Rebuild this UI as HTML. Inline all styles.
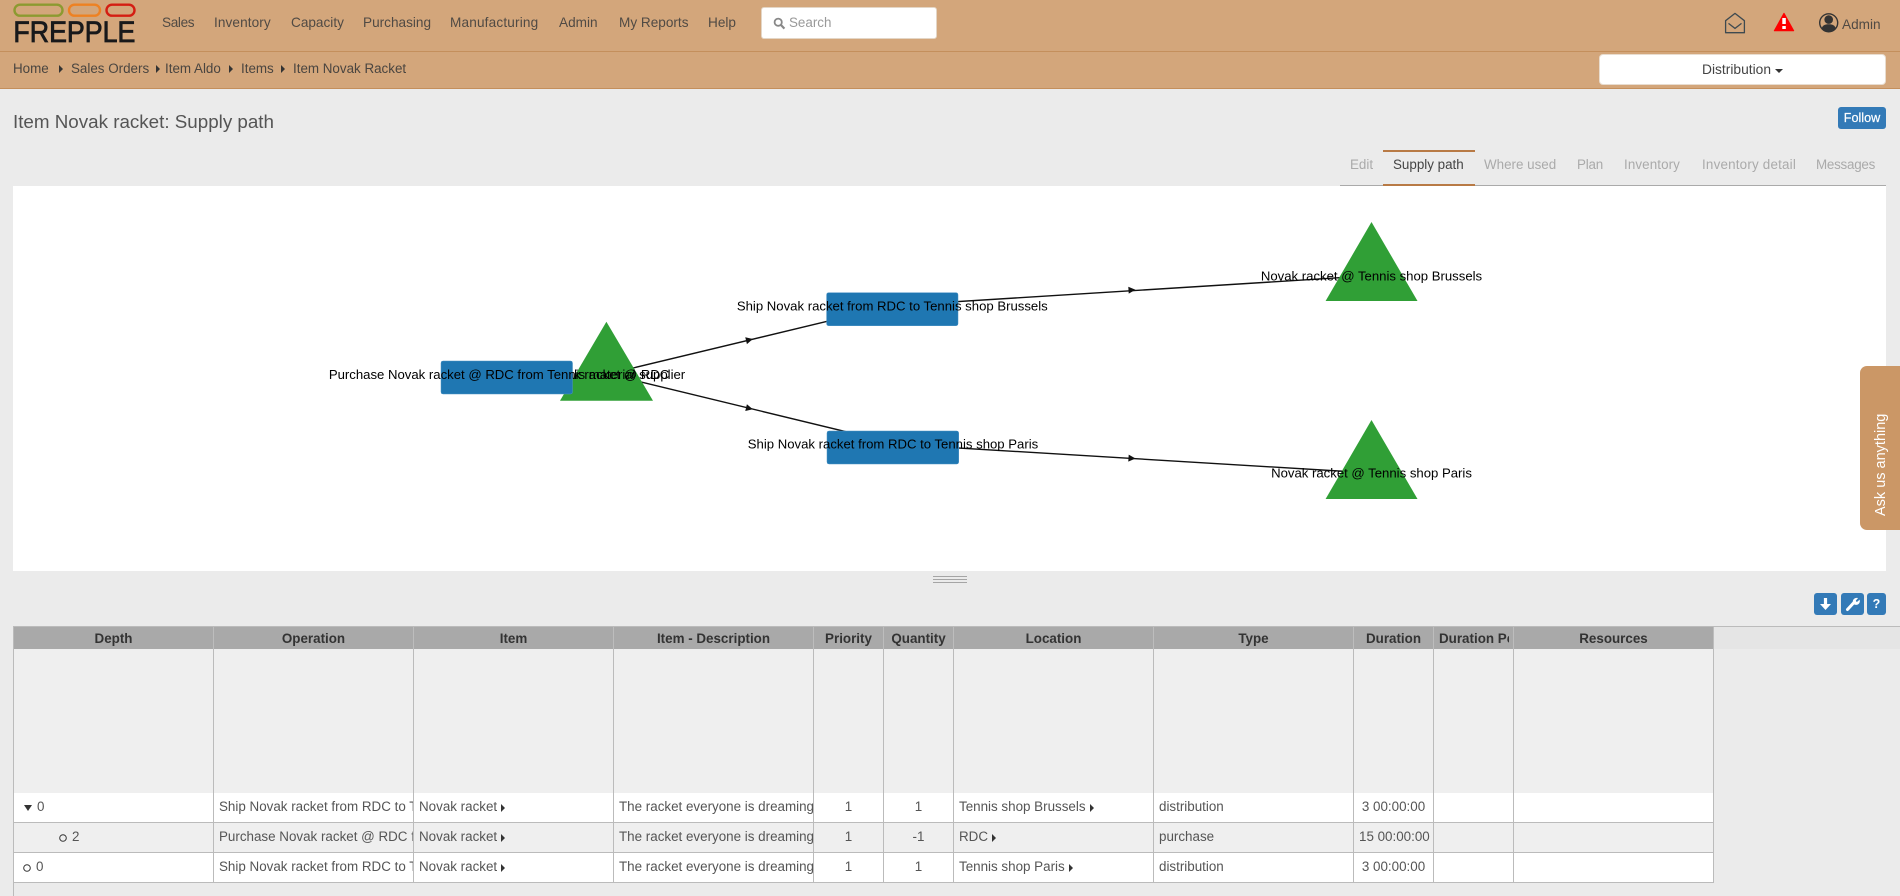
<!DOCTYPE html>
<html lang="en">
<head>
<meta charset="utf-8">
<title>Item Novak racket: Supply path</title>
<style>
html,body{margin:0;padding:0}
body{position:relative;width:1900px;height:896px;overflow:hidden;background:#ebebeb;font-family:"Liberation Sans",sans-serif;color:#555}
.a{position:absolute;white-space:nowrap}
#top{position:absolute;left:0;top:0;width:1900px;height:88px;background:#d3a67b;border-bottom:1px solid #c48f5c}
#top:before{content:"";position:absolute;left:0;right:0;top:51px;height:1px;background:#c48f5c}
.n{font-size:13.6px;line-height:20px;top:13px;color:#504a44}
.b{font-size:13.4px;line-height:20px;top:59px;color:#4a4540}
.ar{display:inline-block;width:0;height:0;border-left:4px solid #333;border-top:4px solid transparent;border-bottom:4px solid transparent}
#search{left:761px;top:7px;width:174px;height:30px;background:#fff;border:1px solid #e4d6c6;border-radius:3px}
#dist{left:1599px;top:54px;width:285px;height:29px;background:#fff;border:1px solid #e8dccf;border-radius:4px;text-align:center;font-size:13.8px;line-height:29px;color:#444}
.caret{display:inline-block;width:0;height:0;border-top:4px solid #333;border-left:4px solid transparent;border-right:4px solid transparent;vertical-align:1px;margin-left:4px}
#follow{left:1838px;top:107px;width:48px;height:22px;background:#337ab7;border-radius:3px;color:#fff;font-size:12.6px;line-height:22px;text-align:center;-webkit-text-stroke:.2px #fff}
.t{font-size:13.4px;line-height:20px;top:155px;color:#aaa}
#tabline{left:1340px;top:185px;width:546px;height:1px;background:#aaa}
#atab{left:1383px;top:150px;width:92px;height:2px;background:#b87a45}
#atab2{left:1383px;top:184px;width:92px;height:2px;background:#b87a45}
#graph{left:13px;top:186px;width:1873px;height:385px;background:#fff}
#ask{left:1860px;top:366px;width:40px;height:164px;background:#cb9766;border-radius:7px 0 0 7px}
#asktxt{left:1872px;top:413px;height:103px;line-height:18px;width:18px;writing-mode:vertical-rl;transform:rotate(180deg);color:#fff;font-size:14.5px;text-align:left}
.sp{left:933px;width:34px;height:1px;background:#a5a5a5}
.btn{top:593px;height:22px;background:#337ab7;border-radius:3px}
#grid{left:13px;top:626px;width:1887px;height:270px;border-top:1px solid #bbb;border-left:1px solid #bbb;box-sizing:border-box}
#grid:before{content:"";position:absolute;left:0;top:0;right:0;height:22px;background:#e5e5e5}
table{position:absolute;left:0;top:0;width:1700px;table-layout:fixed;border-collapse:separate;border-spacing:0;font-size:13.4px}
th,td{box-sizing:border-box;border-right:1px solid #bbb;overflow:hidden;white-space:nowrap;padding:0 5px}
th{height:22px;background:#a9a9a9;color:#333;font-weight:bold;font-size:13.4px;text-align:center;border-right-color:#bdbdbd}
th span{display:block;overflow:hidden;margin-right:-1px}
tr.f td{height:144px;background:#efefef}
tr.r td{height:30px;border-bottom:1px solid #bbb;padding-bottom:3px;color:#555;vertical-align:middle}
tr.w td{background:#fff}
tr.g td{background:#efefef}
td.c{text-align:center}
td .ar{margin-left:4px;vertical-align:-1px}
</style>
</head>
<body>
<header id="top">
<svg class="a" style="left:0;top:0" width="150" height="50" viewBox="0 0 150 50">
<rect x="14.5" y="4.7" width="48" height="11" rx="5.5" fill="none" stroke="#8c9a30" stroke-width="2.4"/>
<rect x="69" y="4.7" width="31" height="11" rx="5.5" fill="none" stroke="#ee8122" stroke-width="2.4"/>
<rect x="106.5" y="4.7" width="28" height="11" rx="5.5" fill="none" stroke="#d41d12" stroke-width="2.4"/>
<text x="13.4" y="42" font-family="Liberation Sans" font-size="29.5" fill="#18191b" stroke="#18191b" stroke-width=".8" textLength="122" lengthAdjust="spacingAndGlyphs">FREPPLE</text>
</svg>
<span class="a n" style="left:162px;letter-spacing:-.35px">Sales</span>
<span class="a n" style="left:214px;letter-spacing:.1px">Inventory</span>
<span class="a n" style="left:291px">Capacity</span>
<span class="a n" style="left:363px">Purchasing</span>
<span class="a n" style="left:450px;letter-spacing:.17px">Manufacturing</span>
<span class="a n" style="left:559px">Admin</span>
<span class="a n" style="left:619px">My Reports</span>
<span class="a n" style="left:708px">Help</span>
<div class="a" id="search">
<svg class="a" style="left:11px;top:9px" width="13" height="13" viewBox="0 0 13 13"><circle cx="5.2" cy="5.2" r="3.6" fill="none" stroke="#888" stroke-width="1.8"/><path d="M8 8l3.4 3.6" stroke="#888" stroke-width="2.2"/></svg>
<span class="a" style="left:27px;top:5px;font-size:13.4px;line-height:20px;color:#999">Search</span>
</div>
<svg class="a" style="left:1720px;top:8px" width="180" height="30" viewBox="1720 8 180 30">
<path d="M1725.6 20.7L1735 13.4l9.4 7.3v12h-18.8z" fill="none" stroke="#3e4a50" stroke-width="1.3" stroke-linejoin="round"/>
<path d="M1728.5 23.4l6.5 5 6.5-5" fill="none" stroke="#3e4a50" stroke-width="1.3"/>
<path d="M1784 13.3l9.7 17.4h-19.4z" fill="#fe0000" stroke="#fe0000" stroke-linejoin="round"/>
<path d="M1782.3 18h3.5v6h-3.5zM1782.3 26h3.5v3h-3.5z" fill="#fff"/>
<circle cx="1828.7" cy="22.8" r="9" fill="none" stroke="#333" stroke-width="1.4"/>
<circle cx="1828.7" cy="19.6" r="4.3" fill="#333"/>
<path d="M1821.8 28.2c.6-2.8 3-4 6.9-4s6.3 1.2 6.9 4c-1.6 2.4-4 3.8-6.9 3.8s-5.3-1.4-6.9-3.8z" fill="#333"/>
</svg>
<span class="a" style="left:1842px;top:15px;font-size:13.6px;line-height:20px;color:#504a44">Admin</span>
<span class="a b" style="left:13px">Home</span><i class="a ar" style="left:59px;top:65px"></i>
<span class="a b" style="left:71px">Sales Orders</span><i class="a ar" style="left:156px;top:65px"></i>
<span class="a b" style="left:165px">Item Aldo</span><i class="a ar" style="left:229px;top:65px"></i>
<span class="a b" style="left:241px">Items</span><i class="a ar" style="left:281px;top:65px"></i>
<span class="a b" style="left:293px">Item Novak Racket</span>
<div class="a" id="dist">Distribution<i class="caret"></i></div>
</header>

<h1 class="a" style="margin:0;left:13px;top:110px;font-size:18.8px;line-height:24px;font-weight:normal;color:#555">Item Novak racket: Supply path</h1>
<div class="a" id="follow">Follow</div>

<span class="a t" style="left:1350px">Edit</span>
<span class="a t" style="left:1393px;color:#444">Supply path</span>
<span class="a t" style="left:1484px">Where used</span>
<span class="a t" style="left:1577px;letter-spacing:-.2px">Plan</span>
<span class="a t" style="left:1624px;letter-spacing:.1px">Inventory</span>
<span class="a t" style="left:1702px;letter-spacing:.2px">Inventory detail</span>
<span class="a t" style="left:1816px;letter-spacing:-.25px">Messages</span>
<div class="a" id="tabline"></div><div class="a" id="atab"></div><div class="a" id="atab2"></div>

<div class="a" id="graph"></div>
<svg class="a" style="left:0;top:0" width="1900" height="896" viewBox="0 0 1900 896" font-family="Liberation Sans" font-size="13.15" fill="#000">
<g stroke="#111" stroke-width="1.4">
<path d="M606 374.5L892 305.7"/><path d="M606 373.5L892.5 443"/>
<path d="M892 305.7L1371.5 275.7"/><path d="M892.5 444L1371.5 473"/>
</g>
<g fill="#111">
<path d="M-3-3.5L4 0L-3 3.5z" transform="translate(749 340) rotate(-13.7)"/>
<path d="M-3-3.5L4 0L-3 3.5z" transform="translate(749 408.3) rotate(13.7)"/>
<path d="M-3-3.5L4 0L-3 3.5z" transform="translate(1131.5 290) rotate(-3.6)"/>
<path d="M-3-3.5L4 0L-3 3.5z" transform="translate(1131.5 458.3) rotate(3.5)"/>
</g>
<polygon points="606.4,321.7 653,400.7 560,400.7" fill="#309f36"/>
<text x="606.4" y="379" text-anchor="middle">Novak racket @ RDC</text>
<polygon points="1371.5,222 1417.5,301 1325.6,301" fill="#309f36"/>
<text x="1371.5" y="280.4" text-anchor="middle">Novak racket @ Tennis shop Brussels</text>
<polygon points="1371.5,420 1417.5,499 1325.6,499" fill="#309f36"/>
<text x="1371.5" y="477.6" text-anchor="middle">Novak racket @ Tennis shop Paris</text>
<rect x="441" y="361" width="131.5" height="33" rx="2" fill="#1f77b2" stroke="#4a92c4" stroke-width=".5"/>
<text x="507" y="379" text-anchor="middle">Purchase Novak racket @ RDC from Tennis material supplier</text>
<rect x="826.6" y="292.7" width="131.4" height="33" rx="2" fill="#1f77b2" stroke="#4a92c4" stroke-width=".5"/>
<text x="892.3" y="310.3" text-anchor="middle">Ship Novak racket from RDC to Tennis shop Brussels</text>
<rect x="827" y="431" width="131.7" height="33" rx="2" fill="#1f77b2" stroke="#4a92c4" stroke-width=".5"/>
<text x="893" y="448.7" text-anchor="middle">Ship Novak racket from RDC to Tennis shop Paris</text>
</svg>

<div class="a" id="ask"></div>
<div class="a" id="asktxt">Ask us anything</div>

<div class="a sp" style="top:576px"></div><div class="a sp" style="top:579px"></div><div class="a sp" style="top:582px"></div>

<div class="a btn" style="left:1814px;width:23px">
<svg width="23" height="22" viewBox="0 0 23 22" style="display:block"><path d="M11.5 5v10" stroke="#fff" stroke-width="3.2" fill="none"/><path d="M6 11h11l-5.500 6z" fill="#fff"/></svg>
</div>
<div class="a btn" style="left:1841px;width:23px">
<svg width="23" height="22" viewBox="0 0 23 22" style="display:block"><path d="M6.500 16.500l6-6.500" stroke="#fff" stroke-width="3" stroke-linecap="round"/><path d="M12.500 10c-.8-2.600 1-5 3.600-4.600l-1.800 2 .4 1.600 1.600.4 2-1.800c.4 2.600-2 4.400-4.600 3.600z" fill="#fff" stroke="#fff"/></svg>
</div>
<div class="a btn" style="left:1867px;width:19px;color:#fff;font-weight:bold;font-size:12.500px;line-height:22px;text-align:center">?</div>

<div class="a" id="grid">
<table>
<colgroup><col style="width:200px"><col style="width:200px"><col style="width:200px"><col style="width:200px"><col style="width:70px"><col style="width:70px"><col style="width:200px"><col style="width:200px"><col style="width:80px"><col style="width:80px"><col style="width:200px"></colgroup>
<thead><tr><th>Depth</th><th>Operation</th><th>Item</th><th>Item - Description</th><th>Priority</th><th>Quantity</th><th>Location</th><th>Type</th><th>Duration</th><th style="text-align:left"><span>Duration Per Unit</span></th><th>Resources</th></tr></thead>
<tbody>
<tr class="f"><td></td><td></td><td></td><td></td><td></td><td></td><td></td><td></td><td></td><td></td><td></td></tr>
<tr class="r w"><td><svg width="8" height="6" viewBox="0 0 8 6" style="margin:0 5px 0 5px"><path d="M0 0h8L4 6z" fill="#333"/></svg>0</td><td>Ship Novak racket from RDC to Tennis shop Brussels</td><td>Novak racket<i class="ar"></i></td><td>The racket everyone is dreaming of</td><td class="c">1</td><td class="c">1</td><td>Tennis shop Brussels<i class="ar"></i></td><td>distribution</td><td class="c">3 00:00:00</td><td></td><td></td></tr>
<tr class="r g"><td><svg width="8" height="8" viewBox="0 0 8 8" style="margin:0 5px -1px 40px"><circle cx="4" cy="4" r="3.3" fill="none" stroke="#333"/></svg>2</td><td>Purchase Novak racket @ RDC from Tennis material supplier</td><td>Novak racket<i class="ar"></i></td><td>The racket everyone is dreaming of</td><td class="c">1</td><td class="c">-1</td><td>RDC<i class="ar"></i></td><td>purchase</td><td class="c">15 00:00:00</td><td></td><td></td></tr>
<tr class="r w"><td><svg width="8" height="8" viewBox="0 0 8 8" style="margin:0 5px -1px 4px"><circle cx="4" cy="4" r="3.3" fill="none" stroke="#333"/></svg>0</td><td>Ship Novak racket from RDC to Tennis shop Paris</td><td>Novak racket<i class="ar"></i></td><td>The racket everyone is dreaming of</td><td class="c">1</td><td class="c">1</td><td>Tennis shop Paris<i class="ar"></i></td><td>distribution</td><td class="c">3 00:00:00</td><td></td><td></td></tr>
</tbody>
</table>
</div>
</body>
</html>
